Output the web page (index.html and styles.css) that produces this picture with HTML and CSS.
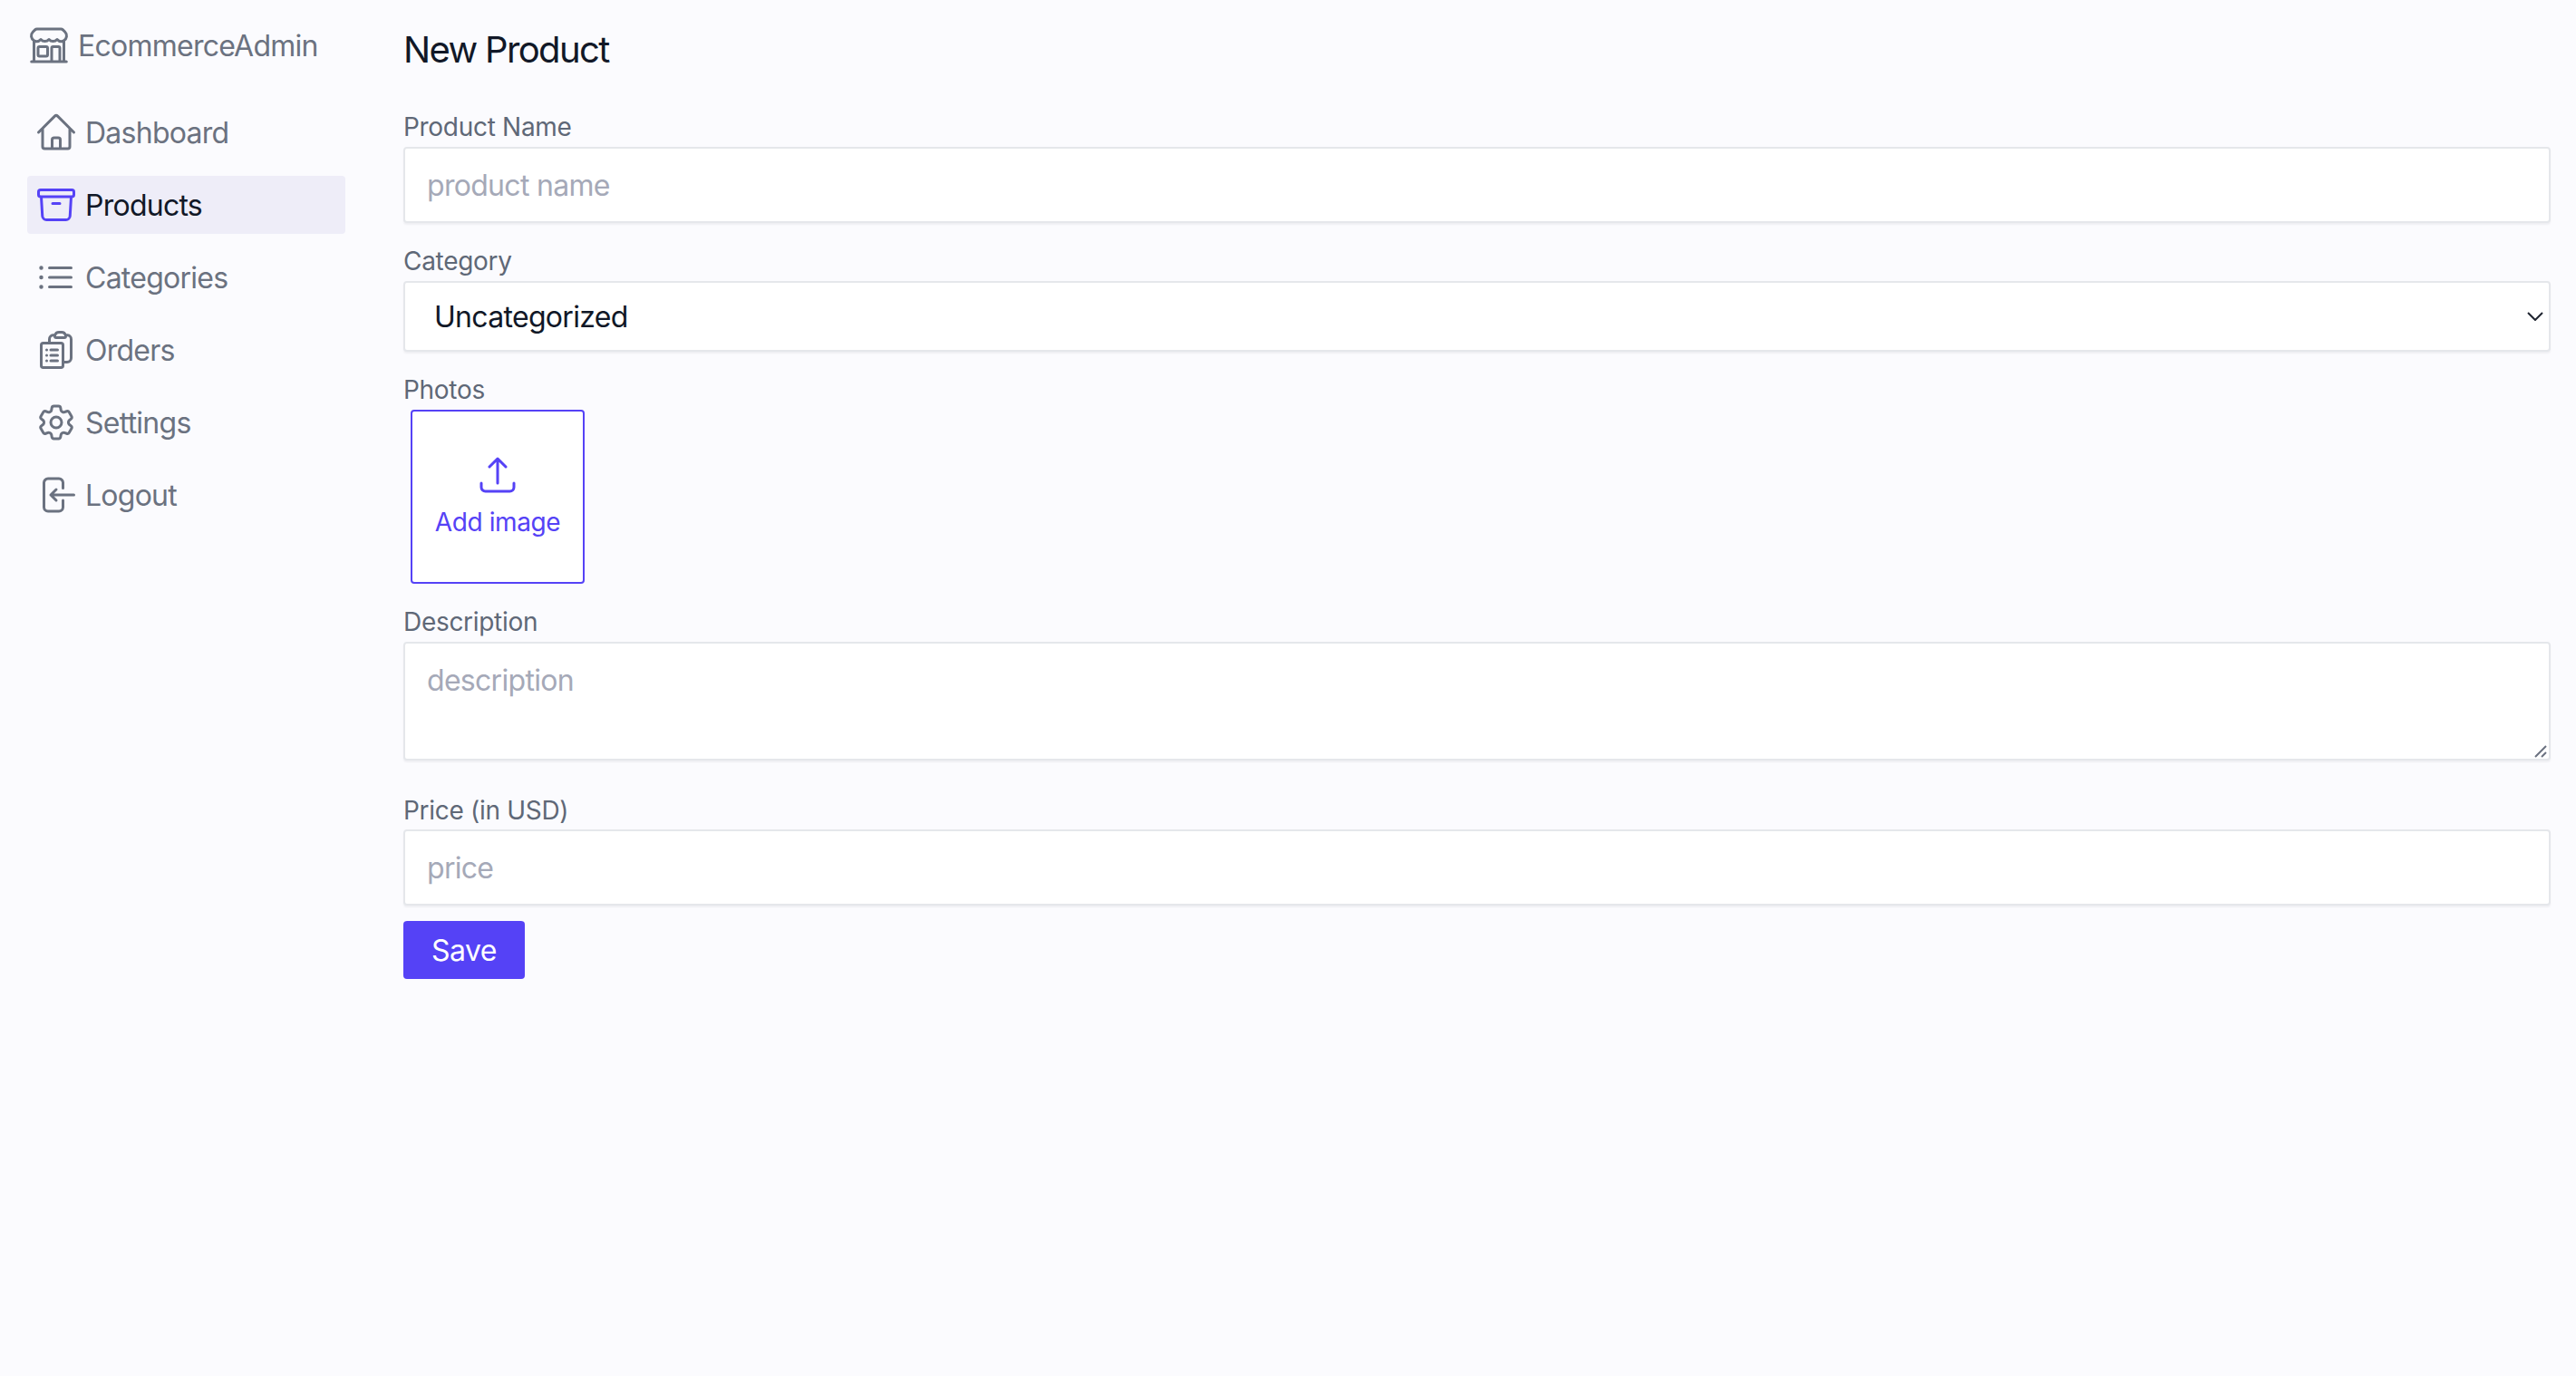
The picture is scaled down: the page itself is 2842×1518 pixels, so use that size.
FILE: index.html
```html
<!DOCTYPE html>
<html lang="en">
  <head>
    <meta charset="UTF-8" />
    <meta name="viewport" content="width=device-width, initial-scale=1.0" />
    <title>New Product</title>
    <link rel="stylesheet" href="styles.css">
  </head>
  <body>
    <aside class="sidebar">
      <a class="logo" href="#">
        <svg class="icon" viewBox="0 0 24 24"><path d="M13.5 21v-7.5a.75.75 0 01.75-.75h3a.75.75 0 01.75.75V21m-4.5 0H2.36m11.14 0H18m0 0h3.64m-1.39 0V9.349m-16.5 11.65V9.35m0 0a3.001 3.001 0 003.75-.615A2.993 2.993 0 009.75 9.75c.896 0 1.7-.393 2.25-1.016a2.993 2.993 0 002.25 1.016c.896 0 1.7-.393 2.25-1.016a3.001 3.001 0 003.75.614m-16.5 0a3.004 3.004 0 01-.621-4.72L4.318 3.44A1.5 1.5 0 015.378 3h13.243a1.5 1.5 0 011.06.44l1.19 1.189a3 3 0 01-.621 4.72m-13.5 8.65h3.75a.75.75 0 00.75-.75V13.5a.75.75 0 00-.75-.75H6.75a.75.75 0 00-.75.75v3.75c0 .415.336.75.75.75z"/></svg>
        <span>EcommerceAdmin</span>
      </a>
      <nav class="nav">
        <a class="nav-link" href="#">
          <svg class="icon" viewBox="0 0 24 24"><path d="M2.25 12l8.954-8.955c.44-.439 1.152-.439 1.591 0L21.75 12M4.5 9.75v10.125c0 .621.504 1.125 1.125 1.125H9.75v-4.875c0-.621.504-1.125 1.125-1.125h2.25c.621 0 1.125.504 1.125 1.125V21h4.125c.621 0 1.125-.504 1.125-1.125V9.75M8.25 21h8.25"/></svg>
          <span>Dashboard</span>
        </a>
        <a class="nav-link active" href="#">
          <svg class="icon" viewBox="0 0 24 24"><path d="M20.25 7.5l-.625 10.632a2.25 2.25 0 01-2.247 2.118H6.622a2.25 2.25 0 01-2.247-2.118L3.75 7.5M10 11.25h4M3.375 7.5h17.25c.621 0 1.125-.504 1.125-1.125v-1.5c0-.621-.504-1.125-1.125-1.125H3.375c-.621 0-1.125.504-1.125 1.125v1.5c0 .621.504 1.125 1.125 1.125z"/></svg>
          <span>Products</span>
        </a>
        <a class="nav-link" href="#">
          <svg class="icon" viewBox="0 0 24 24"><path d="M8.25 6.75h12M8.25 12h12m-12 5.25h12M3.75 6.75h.007v.008H3.75V6.75zm.375 0a.375.375 0 11-.75 0 .375.375 0 01.75 0zM3.75 12h.007v.008H3.75V12zm.375 0a.375.375 0 11-.75 0 .375.375 0 01.75 0zm-.375 5.25h.007v.008H3.75v-.008zm.375 0a.375.375 0 11-.75 0 .375.375 0 01.75 0z"/></svg>
          <span>Categories</span>
        </a>
        <a class="nav-link" href="#">
          <svg class="icon" viewBox="0 0 24 24"><path d="M9 12h3.75M9 15h3.75M9 18h3.75m3 .75H18a2.25 2.25 0 002.25-2.25V6.108c0-1.135-.845-2.098-1.976-2.192a48.424 48.424 0 00-1.123-.08m-5.801 0c-.065.21-.1.433-.1.664 0 .414.336.75.75.75h4.5a.75.75 0 00.75-.75 2.25 2.25 0 00-.1-.664m-5.8 0A2.251 2.251 0 0113.5 2.25H15c1.012 0 1.867.668 2.15 1.586m-5.8 0c-.376.023-.75.05-1.124.08C9.095 4.01 8.25 4.973 8.25 6.108V8.25m0 0H4.875c-.621 0-1.125.504-1.125 1.125v11.25c0 .621.504 1.125 1.125 1.125h9.75c.621 0 1.125-.504 1.125-1.125V9.375c0-.621-.504-1.125-1.125-1.125H8.25zM6.75 12h.008v.008H6.75V12zm0 3h.008v.008H6.75V15zm0 3h.008v.008H6.75V18z"/></svg>
          <span>Orders</span>
        </a>
        <a class="nav-link" href="#">
          <svg class="icon" viewBox="0 0 24 24"><path d="M9.594 3.94c.09-.542.56-.94 1.11-.94h2.593c.55 0 1.02.398 1.11.94l.213 1.281c.063.374.313.686.645.87.074.04.147.083.22.127.324.196.72.257 1.075.124l1.217-.456a1.125 1.125 0 011.37.49l1.296 2.247a1.125 1.125 0 01-.26 1.431l-1.003.827c-.293.24-.438.613-.431.992a6.759 6.759 0 010 .255c-.007.378.138.75.43.99l1.005.828c.424.35.534.954.26 1.43l-1.298 2.247a1.125 1.125 0 01-1.369.491l-1.217-.456c-.355-.133-.75-.072-1.076.124a6.57 6.57 0 01-.22.128c-.331.183-.581.495-.644.869l-.213 1.28c-.09.543-.56.941-1.11.941h-2.594c-.55 0-1.02-.398-1.11-.94l-.213-1.281c-.062-.374-.312-.686-.644-.87a6.52 6.52 0 01-.22-.127c-.325-.196-.72-.257-1.076-.124l-1.217.456a1.125 1.125 0 01-1.369-.49l-1.297-2.247a1.125 1.125 0 01.26-1.431l1.004-.827c.292-.24.437-.613.43-.992a6.932 6.932 0 010-.255c.007-.378-.138-.75-.43-.99l-1.004-.828a1.125 1.125 0 01-.26-1.43l1.297-2.247a1.125 1.125 0 011.37-.491l1.216.456c.356.133.751.072 1.076-.124.072-.044.146-.087.22-.128.332-.183.582-.495.644-.869l.214-1.281z"/><path d="M15 12a3 3 0 11-6 0 3 3 0 016 0z"/></svg>
          <span>Settings</span>
        </a>
        <a class="nav-link" href="#">
          <svg class="icon" viewBox="0 0 24 24"><path d="M15.75 8.25V5.25A2.25 2.25 0 0013.5 3h-6a2.25 2.25 0 00-2.25 2.25v13.5A2.25 2.25 0 007.5 21h6a2.25 2.25 0 002.25-2.25V15M12 9l-3 3m0 0l3 3m-3-3h12.75"/></svg>
          <span>Logout</span>
        </a>
      </nav>
    </aside>

    <main class="content">
      <h1>New Product</h1>
      <form>
        <label for="name">Product Name</label>
        <input id="name" class="field" type="text" placeholder="product name" />

        <label for="category">Category</label>
        <div class="select-wrap">
          <select id="category" class="field">
            <option>Uncategorized</option>
          </select>
          <svg class="chevron" viewBox="0 0 18 10"><path d="M1 1l8 8 8-8"/></svg>
        </div>

        <label>Photos</label>
        <div class="photos">
          <div class="add-image">
            <svg class="icon" viewBox="0 0 24 24"><path d="M3 16.5v2.25A2.25 2.25 0 005.25 21h13.5A2.25 2.25 0 0021 18.75V16.5m-13.5-9L12 3m0 0l4.5 4.5M12 3v13.5"/></svg>
            <span>Add image</span>
          </div>
        </div>

        <label for="description">Description</label>
        <div class="textarea-wrap">
          <textarea id="description" class="field" placeholder="description"></textarea>
          <svg class="grip" viewBox="0 0 14 14"><path d="M1 13L13 1M8 13l5-5"/></svg>
        </div>

        <label class="label-tight" for="price">Price (in USD)</label>
        <input id="price" class="field" type="text" placeholder="price" />

        <button class="btn-save" type="button">Save</button>
      </form>
    </main>
  </body>
</html>
```

FILE: styles.css
```css
:root {
  --bg: #fbfbfe;
  --primary: #5542f6;
  --active-bg: #eeedf8;
  --nav-text: #6b7280;
  --label-text: #5f6877;
  --dark-text: #111827;
  --border: #e5e7eb;
}

* {
  box-sizing: border-box;
}

body {
  margin: 0;
  min-height: 100vh;
  display: flex;
  background: var(--bg);
  color: var(--dark-text);
  font-family: 'Inter', sans-serif;
}

.icon {
  width: 48px;
  height: 48px;
  flex-shrink: 0;
  fill: none;
  stroke: currentColor;
  stroke-width: 1.5;
  stroke-linecap: round;
  stroke-linejoin: round;
}

.sidebar {
  width: 351px;
  flex-shrink: 0;
  margin-left: 30px;
  padding-top: 26px;
  color: var(--nav-text);
  font-size: 32px;
  line-height: 48px;
  letter-spacing: -0.75px;
}

.sidebar span {
  position: relative;
  top: 1px;
}

.logo {
  display: flex;
  gap: 8px;
  margin-bottom: 40px;
  color: inherit;
  text-decoration: none;
}

.nav {
  display: flex;
  flex-direction: column;
  gap: 16px;
}

.nav-link {
  display: flex;
  gap: 8px;
  padding: 8px;
  border-radius: 4px;
  color: inherit;
  text-decoration: none;
}

.nav-link.active {
  background: var(--active-bg);
  color: var(--dark-text);
}

.nav-link.active .icon {
  color: var(--primary);
}

.content {
  flex: 1;
  padding: 27px 28px 0 64px;
}

h1 {
  margin: 0 0 37px;
  font-size: 40px;
  line-height: 56px;
  font-weight: 400;
  letter-spacing: -1.65px;
}

label {
  display: block;
  margin-bottom: 2px;
  color: var(--label-text);
  font-size: 28px;
  line-height: 40px;
  letter-spacing: -0.3px;
}

.label-tight {
  padding-top: 1px;
  margin-bottom: 1px;
}

.field {
  display: block;
  width: 100%;
  height: 84px;
  margin-bottom: 22px;
  padding: 1px 24px 0;
  border: 2px solid var(--border);
  border-radius: 4px;
  background: #fff;
  box-shadow: 0 2px 2px rgba(17, 24, 39, 0.05);
  color: var(--dark-text);
  font-family: inherit;
  font-size: 32px;
  letter-spacing: -0.7px;
  outline: none;
}

.field::placeholder {
  color: #a5a9b8;
  opacity: 1;
}

.select-wrap,
.textarea-wrap {
  position: relative;
}

select.field {
  height: 78px;
  margin-bottom: 22px;
  padding: 1px 32px 0;
  appearance: none;
}

.chevron {
  position: absolute;
  top: 34px;
  right: 8px;
  width: 18px;
  height: 10px;
  fill: none;
  stroke: #1f2430;
  stroke-width: 2;
}

.photos {
  display: flex;
  margin-bottom: 22px;
  padding-left: 8px;
}

.add-image {
  width: 192px;
  height: 192px;
  display: flex;
  flex-direction: column;
  align-items: center;
  padding-top: 46px;
  border: 2px solid var(--primary);
  border-radius: 4px;
  background: #fff;
  color: var(--primary);
  font-size: 28px;
  line-height: 40px;
  letter-spacing: -0.4px;
}

.add-image span {
  margin-top: 8px;
}

textarea.field {
  height: 131px;
  margin-bottom: 34px;
  padding: 21px 24px;
  resize: none;
  line-height: 40px;
}

.grip {
  position: absolute;
  right: 4px;
  bottom: 3px;
  width: 14px;
  height: 14px;
  fill: none;
  stroke: #6b7280;
  stroke-width: 2;
}

.btn-save {
  display: block;
  width: 134px;
  height: 64px;
  margin-top: -5px;
  padding: 0;
  border: 0;
  border-radius: 4px;
  background: var(--primary);
  color: #fff;
  font-family: inherit;
  font-size: 32px;
  letter-spacing: -0.5px;
}
```
